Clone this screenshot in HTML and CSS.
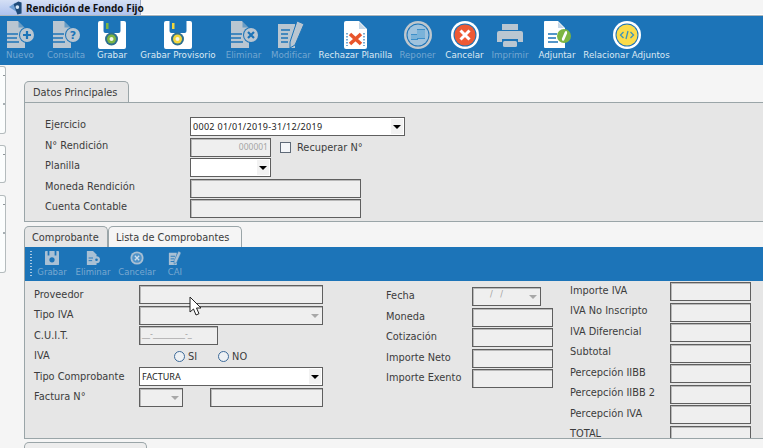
FILE: index.html
```html
<!DOCTYPE html>
<html lang="es">
<head>
<meta charset="utf-8">
<title>Rendición de Fondo Fijo</title>
<link rel="stylesheet" href="styles.css">
</head>
<body>
<svg class="defs" width="0" height="0" aria-hidden="true">
  <symbol id="doc" viewBox="0 0 28 28">
    <path d="M1 0h11l7 7v20H1z" fill="currentColor"/>
    <path d="M12.500 0l6.500 6.500h-6.500z" fill="#1c74b8" opacity=".5"/>
    <path d="M1 13h11M1 17h10M1 21h12" stroke="#1c74b8" stroke-width="1.600"/>
    <circle cx="21" cy="14" r="8" fill="#1c74b8"/>
    <circle cx="21" cy="14" r="7" fill="currentColor"/>
  </symbol>
  <symbol id="floppy" viewBox="0 0 28 28">
    <path d="M2 0h3.500v10q0 2 2 2h13q2 0 2-2V0H26a2 2 0 0 1 2 2v24a2 2 0 0 1-2 2H2a2 2 0 0 1-2-2V2a2 2 0 0 1 2-2z" fill="#fff"/>
    <rect x="8" y="2" width="2.500" height="6" fill="var(--dot)"/>
    <circle cx="13.500" cy="18" r="6.500" fill="#2f6f8e"/>
    <circle cx="13.500" cy="18" r="4.500" fill="var(--dot)"/>
    <circle cx="13.500" cy="18" r="2" fill="#f3f6ea"/>
  </symbol>
</svg>

<nav class="tabstrip">
  <div class="doc-tab">
    <svg class="doc-tab-icon" viewBox="0 0 14 14"><path d="M0 6 L7 1 L8 11z" fill="#6f9fd4"/><path d="M5 3 L10 0 L13.500 1 L13.500 13 L9 14z" fill="#1f4a78"/><circle cx="9" cy="6" r="2" fill="#d8e8f8"/></svg>
    <span>Rendición de Fondo Fijo</span>
  </div>
</nav>

<header class="toolbar">
  <div class="tool off tool-nuevo">
    <svg class="ico" viewBox="0 0 28 28"><use href="#doc"/><path d="M21 10v8M17 14h8" stroke="#1c74b8" stroke-width="2.200"/></svg>
    <span>Nuevo</span>
  </div>
  <div class="tool off tool-consulta">
    <svg class="ico" viewBox="0 0 28 28"><use href="#doc"/><text x="21" y="18" class="qmark">?</text></svg>
    <span>Consulta</span>
  </div>
  <div class="tool tool-grabar">
    <svg class="ico dot-green" viewBox="0 0 28 28"><use href="#floppy"/></svg>
    <span>Grabar</span>
  </div>
  <div class="tool tool-prov">
    <svg class="ico dot-yellow" viewBox="0 0 28 28"><use href="#floppy"/></svg>
    <span>Grabar Provisorio</span>
  </div>
  <div class="tool off tool-eliminar">
    <svg class="ico" viewBox="0 0 28 28"><use href="#doc"/><path d="M18 11l6 6M24 11l-6 6" stroke="#1c74b8" stroke-width="2.200"/></svg>
    <span>Eliminar</span>
  </div>
  <div class="tool off tool-modificar">
    <svg class="ico" viewBox="0 0 28 28"><path d="M1 3h17v24H1z" fill="#b9c6d1"/><path d="M4 9h9M4 13h7M4 17h7M4 21h7" stroke="#1c74b8" stroke-width="1.500"/><path d="M20 0l7 3-9 21-5 3 0-6z" fill="#b9c6d1" stroke="#1c74b8" stroke-width="1"/></svg>
    <span>Modificar</span>
  </div>
  <div class="tool tool-rechazar">
    <svg class="ico" viewBox="0 0 28 28"><path d="M4 0h13l8 8v18a2 2 0 0 1-2 2H4a2 2 0 0 1-2-2V2a2 2 0 0 1 2-2z" fill="#fff"/><path d="M17 1l7 7h-7z" fill="#c6d8e8"/><path d="M8 13l11 10M19 13L8 23" stroke="#e8552c" stroke-width="3.600"/><path d="M5 12v13M22 12v13" stroke="#1c74b8" stroke-width="1.200" stroke-dasharray="1.500 1.500"/></svg>
    <span>Rechazar Planilla</span>
  </div>
  <div class="tool off tool-reponer">
    <svg class="ico" viewBox="0 0 28 28"><circle cx="14" cy="14" r="14" fill="#bfc7cd"/><circle cx="14" cy="14" r="11.500" fill="#1c74b8"/><circle cx="14" cy="14" r="10.500" fill="#9fc3de"/><path d="M7 13h7v6H7zM13 8h8v10h-8z" fill="#3d8fc9"/><path d="M7 15h6M7 17h6M13 10h8M13 12h8M13 14h8M13 16h8" stroke="#d8e8f2" stroke-width=".8"/></svg>
    <span>Reponer</span>
  </div>
  <div class="tool tool-cancelar">
    <svg class="ico" viewBox="0 0 28 28"><circle cx="14" cy="14" r="14" fill="#fff"/><circle cx="14" cy="14" r="11.500" fill="#1c74b8"/><circle cx="14" cy="14" r="10.500" fill="#ee5a35"/><path d="M9.500 9.500l9 9M18.500 9.500l-9 9" stroke="#fff" stroke-width="3"/></svg>
    <span>Cancelar</span>
  </div>
  <div class="tool off tool-imprimir">
    <svg class="ico" viewBox="0 0 28 28"><path d="M6 3h16v6H6z" fill="#b9c6d1"/><path d="M3 10h22a2 2 0 0 1 2 2v9h-5v-3H6v3H1v-9a2 2 0 0 1 2-2z" fill="#b9c6d1"/><rect x="7" y="20" width="14" height="6" rx="1.500" fill="#b9c6d1"/></svg>
    <span>Imprimir</span>
  </div>
  <div class="tool tool-adjuntar">
    <svg class="ico" viewBox="0 0 28 28"><path d="M2 0h13l7 7v20H2a1 1 0 0 1-1-1V1a1 1 0 0 1 1-1z" fill="#fff"/><path d="M15 1l6 6h-6z" fill="#c6d8e8"/><path d="M5 13h9M5 17h8M5 21h10" stroke="#1c74b8" stroke-width="1.500"/><circle cx="21" cy="15" r="7" fill="#7cb542"/><path d="M22.500 11l-3 7q0 1.500 1 1l3-7q0-2-1-1z" fill="none" stroke="#fff" stroke-width="1.300"/></svg>
    <span>Adjuntar</span>
  </div>
  <div class="tool tool-relacionar">
    <svg class="ico" viewBox="0 0 28 28"><circle cx="14" cy="14" r="14" fill="#fff"/><circle cx="14" cy="14" r="11.500" fill="#1c74b8"/><circle cx="14" cy="14" r="10.500" fill="#fbdc4a"/><path d="M10.500 11l-3 3 3 3M17.500 11l3 3-3 3M15 10l-2 8" fill="none" stroke="#3d93b8" stroke-width="1.300"/></svg>
    <span>Relacionar Adjuntos</span>
  </div>
</header>

<div class="workspace">
  <aside class="side">
    <div class="side-box side-a"></div>
    <div class="side-box side-b"></div>
    <div class="side-box side-c"></div>
  </aside>

  <main class="content">
    <div class="tabs"><div class="tab tab-on tab-datos">Datos Principales</div></div>
    <section class="panel panel-datos">
      <div class="row"><label>Ejercicio</label><div class="sel sel-wide"><span>0002 01/01/2019-31/12/2019</span><i class="arrow"></i></div></div>
      <div class="row"><label>N° Rendición</label><div class="fld fld-num">000001</div><span class="check"></span><span class="check-label">Recuperar N°</span></div>
      <div class="row"><label>Planilla</label><div class="sel sel-num"><span></span><i class="arrow"></i></div></div>
      <div class="row"><label>Moneda Rendición</label><div class="fld fld-mon"></div></div>
      <div class="row"><label>Cuenta Contable</label><div class="fld fld-mon"></div></div>
    </section>

    <div class="tabs tabs-2">
      <div class="tab tab-on tab-comp">Comprobante</div>
      <div class="tab tab-lista">Lista de Comprobantes</div>
    </div>
    <section class="panel panel-comp">
      <div class="subbar">
        <i class="grip"></i>
        <div class="subtool sub-grabar">
          <svg viewBox="0 0 16 16"><path d="M1 0h2v5h2V0h6v5h2V0h2a1 1 0 0 1 1 1v14a1 1 0 0 1-1 1H1a1 1 0 0 1-1-1V1a1 1 0 0 1 1-1z" fill="#a9c0d4"/><circle cx="8" cy="10" r="3" fill="#1c74b8"/></svg>
          <span>Grabar</span>
        </div>
        <div class="subtool sub-eliminar">
          <svg viewBox="0 0 16 16"><path d="M1 0h7l4 4v12H1z" fill="#a9c0d4"/><path d="M3 8h5M3 11h4" stroke="#1c74b8"/><circle cx="12" cy="10" r="4" fill="#a9c0d4"/><circle cx="12" cy="10" r="1.500" fill="#1c74b8"/></svg>
          <span>Eliminar</span>
        </div>
        <div class="subtool sub-cancelar">
          <svg viewBox="0 0 16 16"><circle cx="8" cy="8" r="7.500" fill="#a9c0d4"/><circle cx="8" cy="8" r="5.500" fill="#4f93c9"/><path d="M5.500 5.500l5 5M10.500 5.500l-5 5" stroke="#cfe0ee" stroke-width="1.500"/></svg>
          <span>Cancelar</span>
        </div>
        <div class="subtool sub-cai">
          <svg viewBox="0 0 16 16"><path d="M1 2h9v14H1z" fill="#a9c0d4"/><path d="M3 6h5M3 9h4M3 12h4" stroke="#1c74b8"/><path d="M12 0l3 2-5 11-3 2 0-4z" fill="#a9c0d4" stroke="#1c74b8" stroke-width=".6"/></svg>
          <span>CAI</span>
        </div>
      </div>
      <div class="form">
        <div class="col col-1">
          <div class="row"><label>Proveedor</label><div class="fld fld-full"></div></div>
          <div class="row"><label>Tipo IVA</label><div class="fld fld-full fld-drop"><i class="arrow arrow-off"></i></div></div>
          <div class="row"><label>C.U.I.T.</label><div class="fld fld-cuit">__-________-_</div></div>
          <div class="row"><label>IVA</label><div class="radios"><i class="radio"></i><span class="r-si">SI</span><i class="radio radio-no"></i><span class="r-no">NO</span></div></div>
          <div class="row"><label>Tipo Comprobante</label><div class="sel sel-full"><span>FACTURA</span><i class="arrow"></i></div></div>
          <div class="row"><label>Factura N°</label><div class="fld fld-let fld-drop"><i class="arrow arrow-off"></i></div><div class="fld fld-nro"></div></div>
        </div>
        <div class="col col-2">
          <div class="row"><label>Fecha</label><div class="fld fld-date fld-drop"><span class="date-mask">/ &nbsp; /</span><i class="arrow arrow-off"></i></div></div>
          <div class="row"><label>Moneda</label><div class="fld fld-amt"></div></div>
          <div class="row"><label>Cotización</label><div class="fld fld-amt"></div></div>
          <div class="row"><label>Importe Neto</label><div class="fld fld-amt"></div></div>
          <div class="row"><label>Importe Exento</label><div class="fld fld-amt"></div></div>
        </div>
        <div class="col col-3">
          <div class="row"><label>Importe IVA</label><div class="fld fld-amt"></div></div>
          <div class="row"><label>IVA No Inscripto</label><div class="fld fld-amt"></div></div>
          <div class="row"><label>IVA Diferencial</label><div class="fld fld-amt"></div></div>
          <div class="row"><label>Subtotal</label><div class="fld fld-amt"></div></div>
          <div class="row"><label>Percepción IIBB</label><div class="fld fld-amt"></div></div>
          <div class="row"><label>Percepción IIBB 2</label><div class="fld fld-amt"></div></div>
          <div class="row"><label>Percepción IVA</label><div class="fld fld-amt"></div></div>
          <div class="row"><label>TOTAL</label><div class="fld fld-amt"></div></div>
        </div>
      </div>
    </section>
    <div class="tabs tabs-3"><div class="tab tab-last"></div></div>
  </main>
</div>

<svg class="cursor" viewBox="0 0 13 20"><path d="M1 1v15l3.500-3 2.500 6 3-1.300-2.500-5.700H12z" fill="#fff" stroke="#222" stroke-width="1"/></svg>
</body>
</html>
```

FILE: styles.css
```css
* { box-sizing: border-box; }
html, body { margin: 0; height: 448px; overflow: hidden; }
body {
  position: relative;
  width: 763px;
  background: #f5f5f5;
  font-family: "DejaVu Sans", sans-serif;
  font-size: 10px;
  color: #3c3c3c;
}
.defs { position: absolute; }

/* document tabs */
.tabstrip { height: 16px; border-bottom: 1px solid #aeb6bb; box-shadow: inset 0 -1px 0 #fff; }
.doc-tab {
  display: flex;
  align-items: center;
  gap: 4px;
  width: 141px;
  height: 15px;
  padding-left: 9px;
  background: linear-gradient(#d4dff5, #aec2ee);
  border-right: 1px solid #9aa9c6;
  font-family: "Noto Sans", sans-serif;
  font-size: 10px;
  font-weight: 700;
  color: #111;
  white-space: nowrap;
}
.doc-tab-icon { width: 13px; height: 14px; flex: none; }

/* main toolbar */
.toolbar {
  display: flex;
  height: 49px;
  padding-left: 7px;
  background: #1c74b8;
  color: #dce9f3;
  font-size: 8.7px;
}
.tool { display: flex; flex-direction: column; align-items: center; padding-top: 5px; white-space: nowrap; }
.tool span { margin-top: 1px; line-height: 11px; }
.tool.off { color: #74a7d1; }
.tool.off .ico { color: #b9c6d1; }
.ico { width: 28px; height: 28px; flex: none; }
.qmark { font-size: 11px; font-weight: 700; fill: #1c74b8; text-anchor: middle; }
.dot-green { --dot: #7cb542; }
.dot-yellow { --dot: #f1d63c; }
.tool-nuevo { width: 26px; margin-right: 15px; }
.tool-consulta { width: 36px; margin-right: 13px; }
.tool-grabar { width: 30px; margin-right: 13px; }
.tool-prov { width: 76px; margin-right: 11px; }
.tool-eliminar { width: 33px; margin-right: 11px; }
.tool-modificar { width: 40px; margin-right: 9px; }
.tool-rechazar { width: 71px; margin-right: 9px; }
.tool-reponer { width: 35px; margin-right: 11px; }
.tool-cancelar { width: 37px; margin-right: 10px; }
.tool-imprimir { width: 34px; margin-right: 11px; }
.tool-adjuntar { width: 38px; margin-right: 9px; }
.tool-relacionar { width: 83px; }

/* layout below toolbar */
.workspace { display: flex; height: 383px; overflow: hidden; }
.side { width: 24px; flex: none; }
.side-box {
  width: 6px;
  background-color: #fbfdfd;
  background-repeat: no-repeat;
  background-image: linear-gradient(#8d9498, #8d9498), linear-gradient(#a8b0b4, #a8b0b4);
  background-size: 2px 1px, 2px 2px;
  background-position: 3px 8px, 3px 36px;
  border: 1px solid #b4bbbd;
  border-left: 0;
  border-radius: 0 3px 3px 0;
}
.side-a { height: 68px; margin-top: 1px; }
.side-b { height: 38px; margin-top: 11px; }
.side-c { height: 78px; margin-top: 12px; }
.content { flex: 1; min-width: 0; padding-top: 16px; }

/* tabs */
.tabs { display: flex; height: 21px; }
.tabs-2 { margin-top: 4px; }
.tabs-3 { margin-top: 3px; }
.tab {
  display: flex;
  align-items: center;
  height: 21px;
  padding-left: 8px;
  border: 1px solid #9aa5a8;
  border-bottom: 0;
  border-radius: 5px 5px 0 0;
  font-size: 9.8px;
  white-space: nowrap;
}
.tab-on { background: #e6e6e6; }
.tab-datos { width: 105px; }
.tab-comp { width: 84px; padding-left: 7px; }
.tab-lista { width: 134px; background: #f5f5f5; padding-left: 7px; }
.tab-last { width: 123px; background: #ededed; }

/* panels */
.panel { background: #e6e6e6; border: 1px solid #9aa5a8; border-right: 0; }
.panel-datos { height: 120px; padding: 14px 0 0 20px; display: flex; flex-direction: column; gap: 1.5px; }
.panel-comp { height: 192px; border-top: 0; overflow: hidden; }

.row { display: flex; align-items: center; height: 19px; flex: none; }
.row label { flex: none; width: 145px; padding-bottom: 4px; font-size: 9.8px; white-space: nowrap; }

/* fields */
.fld, .sel {
  flex: none;
  position: relative;
  height: 19px;
  background: #efefef;
  border: 1px solid #5f5f5f;
  box-shadow: inset 1px 1px 0 #b9b9b9;
}
.sel { background: #fff; box-shadow: none; display: flex; align-items: center; padding-left: 2px; font-family: "Noto Sans", sans-serif; font-size: 9px; color: #222; }
.arrow {
  position: absolute;
  right: 1px;
  top: 1px;
  bottom: 1px;
  width: 12px;
  background: #f2f2f2;
}
.arrow::after {
  content: "";
  position: absolute;
  left: 2px;
  top: 6px;
  border: 4px solid transparent;
  border-top: 4px solid #000;
  border-bottom: 0;
}
.arrow-off { background: transparent; }
.arrow-off::after { border-top-color: #a8a8a8; }
.sel-wide { width: 215px; letter-spacing: .3px; }
.sel-num { width: 81px; }
.sel-full { width: 184px; }
.fld-num { width: 81px; padding-right: 2px; text-align: right; font-family: "Noto Sans", sans-serif; font-size: 8.5px; line-height: 16px; color: #a5a5a5; }
.fld-mon { width: 171px; }
.check { width: 11px; height: 11px; margin-left: 9px; flex: none; background: #f4f6f9; border: 1px solid #5f6a78; }
.check-label { margin-left: 6px; font-size: 9.8px; }

/* sub toolbar */
.subbar { position: relative; display: flex; height: 34px; background: #1c74b8; color: #79a8d0; font-size: 8.5px; }
.grip { width: 2px; height: 26px; margin: 4px 0 0 5px; flex: none; background: repeating-linear-gradient(#a9c8e2 0 1px, transparent 1px 3px); }
.subtool { display: flex; flex-direction: column; align-items: center; padding-top: 4px; white-space: nowrap; }
.subtool svg { width: 14px; height: 14px; flex: none; }
.subtool span { line-height: 11px; margin-top: 2px; }
.sub-grabar { width: 32px; margin-left: 4px; }
.sub-eliminar { width: 34px; margin-left: 8px; }
.sub-cancelar { width: 38px; margin-left: 8px; }
.sub-cai { width: 18px; margin-left: 10px; }

/* comprobante form */
.form { display: flex; }
.col { display: flex; flex-direction: column; gap: 1.5px; flex: none; }
.col-1 { width: 298px; padding: 4px 0 0 8px; margin-right: 62px; }
.col-1 label { width: 106px; padding: 0 0 1px 1px; }
.col-2 { width: 168px; padding-top: 6px; margin-right: 17px; }
.col-2 label { width: 87px; padding: 0 0 2px 1px; }
.col-3 { width: 181px; padding-top: 1px; }
.col-3 label { width: 100px; padding-bottom: 3px; }
.fld-full { width: 184px; }
.fld-cuit { width: 79px; padding-left: 2px; font-size: 8px; line-height: 16px; color: #a0a0a0; }
.fld-let { width: 44px; }
.fld-nro { width: 113px; margin-left: 27px; }
.fld-amt { width: 81px; }
.fld-date { width: 69px; }
.date-mask { position: absolute; left: 17px; top: 2px; font-size: 8px; color: #a0a0a0; }
.radios { display: flex; align-items: center; font-size: 9.8px; }
.radio { width: 11px; height: 11px; flex: none; margin-left: 35px; border: 1px solid #3d6a99; border-radius: 50%; background: #eef1f4; }
.radio-no { margin-left: 21px; }
.r-si, .r-no { margin-left: 3px; }

.cursor { position: absolute; left: 189px; top: 296px; width: 13px; height: 20px; }
```
